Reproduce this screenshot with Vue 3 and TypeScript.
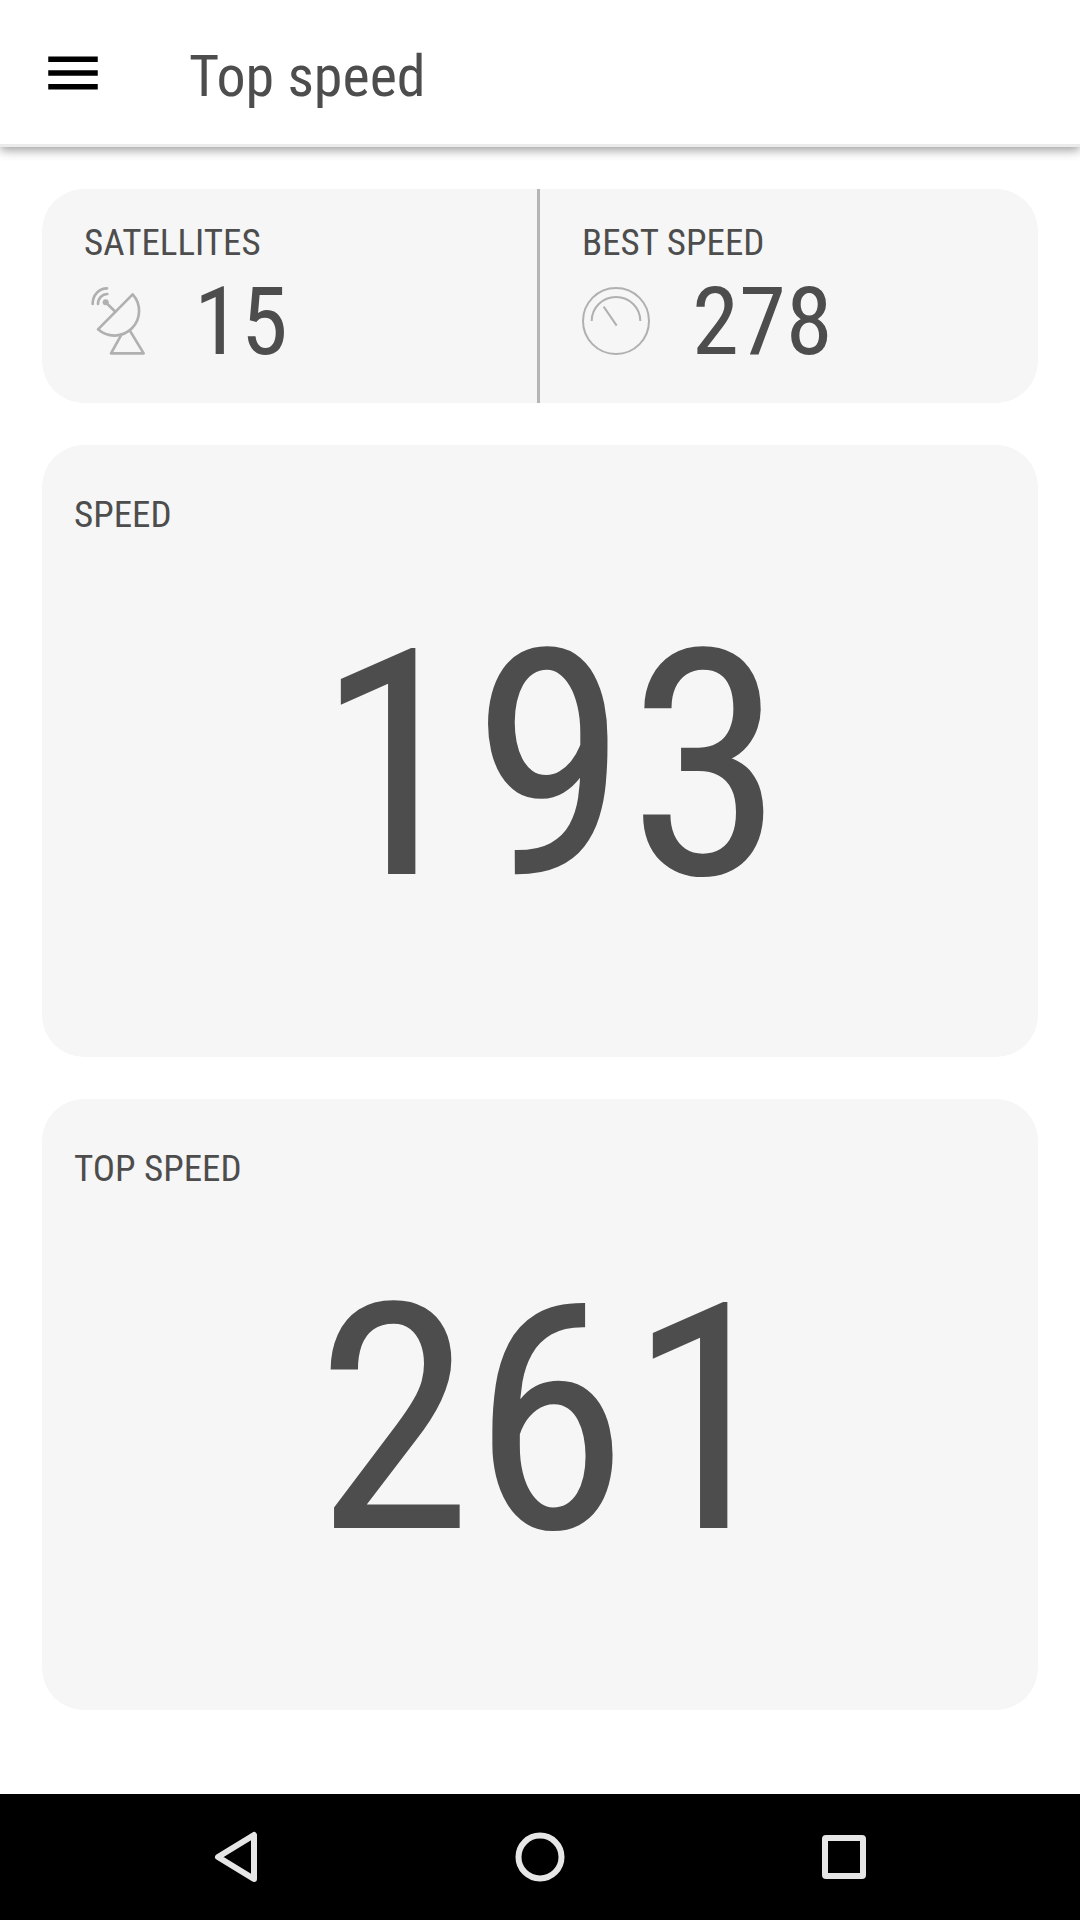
<script setup lang="ts">
import { ref } from 'vue'

interface Reading {
  label: string
  value: number
}

const satellites = ref<Reading>({ label: 'SATELLITES', value: 15 })
const bestSpeed = ref<Reading>({ label: 'BEST SPEED', value: 278 })
const gauges = ref<Reading[]>([
  { label: 'SPEED', value: 193 },
  { label: 'TOP SPEED', value: 261 },
])
</script>

<template>
  <div class="screen">
    <header class="app-bar">
      <button class="icon-button" type="button" aria-label="Open menu">
        <svg class="menu-icon" viewBox="0 0 24 24" aria-hidden="true">
          <path d="M3 18h18v-2H3v2zm0-5h18v-2H3v2zm0-7v2h18V6H3z" />
        </svg>
      </button>
      <h1 class="title">Top speed</h1>
    </header>

    <main class="content">
      <section class="summary">
        <div class="stat">
          <h2 class="label">{{ satellites.label }}</h2>
          <div class="stat-row">
            <svg class="stat-icon" viewBox="0 0 204 204" aria-hidden="true">
              <g class="dish">
                <path d="M146 22 42 127A74 74 0 0 0 146 22Z" />
                <path d="M65 46 94 74" />
                <path d="M26 51A43 46 0 0 1 69 4M42 51A28 30 0 0 1 70 21" />
                <path d="M111 145 81 199H179L139 133" />
              </g>
              <circle class="feed" cx="65" cy="46" r="9" />
            </svg>
            <span class="stat-value">{{ satellites.value }}</span>
          </div>
        </div>
        <div class="stat">
          <h2 class="label">{{ bestSpeed.label }}</h2>
          <div class="stat-row">
            <svg class="stat-icon" viewBox="0 0 204 204" aria-hidden="true">
              <g class="dial">
                <circle cx="102" cy="102" r="99" />
                <path d="M29 102A73 72 0 0 1 175 102M65 59 104 116" />
              </g>
            </svg>
            <span class="stat-value">{{ bestSpeed.value }}</span>
          </div>
        </div>
      </section>

      <section v-for="gauge in gauges" :key="gauge.label" class="gauge">
        <h2 class="label">{{ gauge.label }}</h2>
        <p class="gauge-value">{{ gauge.value }}</p>
      </section>
    </main>

    <nav class="system-bar" aria-label="System">
      <button class="icon-button" type="button" aria-label="Back">
        <svg class="nav-icon" viewBox="0 0 60 60" aria-hidden="true">
          <path d="M48 8V52L12 30Z" />
        </svg>
      </button>
      <button class="icon-button" type="button" aria-label="Home">
        <svg class="nav-icon" viewBox="0 0 60 60" aria-hidden="true">
          <circle cx="30" cy="30" r="21.5" />
        </svg>
      </button>
      <button class="icon-button" type="button" aria-label="Recent apps">
        <svg class="nav-icon" viewBox="0 0 60 60" aria-hidden="true">
          <rect x="11" y="11" width="38" height="38" rx="1" />
        </svg>
      </button>
    </nav>
  </div>
</template>

<style>
body {
  margin: 0;
  background: #fff;
}
</style>

<style scoped>
.screen {
  display: flex;
  flex-direction: column;
  min-height: 100vh;
  color: #4d4d4d;
  font-family: "Roboto Condensed", "Liberation Sans Narrow", Roboto, sans-serif;
}

.icon-button {
  display: flex;
  align-items: center;
  justify-content: center;
  padding: 0;
  border: 0;
  background: none;
}

.app-bar {
  box-sizing: border-box;
  display: flex;
  align-items: center;
  gap: 83px;
  height: 147px;
  padding: 2px 40px 0;
  border-bottom: 3px solid #ebebeb;
  box-shadow: 0 3px 10px rgba(0, 0, 0, 0.4);
}

.menu-icon {
  width: 66px;
  height: 66px;
  fill: #000;
}

.title {
  margin: 0;
  padding-top: 6px;
  font-size: 58px;
  line-height: 70px;
  font-weight: 400;
}

.content {
  display: flex;
  flex: 1;
  flex-direction: column;
  gap: 42px;
  padding: 42px 42px 84px;
}

.summary {
  display: grid;
  grid-template-columns: 1fr 1fr;
  overflow: hidden;
  border-radius: 42px;
  background: #f6f6f6;
}

.stat {
  padding: 33px 42px 25px;
}

.stat:first-child {
  border-right: 3px solid #b5b5b5;
}

.label {
  margin: 0;
  font-size: 37px;
  line-height: 42px;
  font-weight: 400;
}

.stat-row {
  display: flex;
  align-items: center;
  gap: 42px;
}

.stat-icon {
  width: 68px;
  height: 68px;
  fill: none;
  stroke: #b0b0b0;
}

.dish {
  stroke-width: 8;
  stroke-linecap: round;
  stroke-linejoin: round;
}

.feed {
  fill: #b0b0b0;
  stroke: none;
}

.dial {
  stroke-width: 6;
}

.stat-value {
  padding-top: 2px;
  font-size: 95px;
  line-height: 112px;
}

.gauge {
  display: flex;
  flex: 1;
  flex-direction: column;
  padding: 49px 32px 59px;
  border-radius: 42px;
  background: #f6f6f6;
}

.gauge-value {
  display: flex;
  flex: 1;
  align-items: center;
  justify-content: center;
  margin: 0;
  padding-left: 20px;
  font-size: 316px;
  line-height: 371px;
}

.system-bar {
  display: flex;
  height: 126px;
  padding: 0 84px;
  background: #000;
}

.system-bar .icon-button {
  flex: 1;
}

.nav-icon {
  width: 60px;
  height: 60px;
  fill: none;
  stroke: #e6e6e6;
  stroke-width: 6;
  stroke-linejoin: round;
}
</style>
